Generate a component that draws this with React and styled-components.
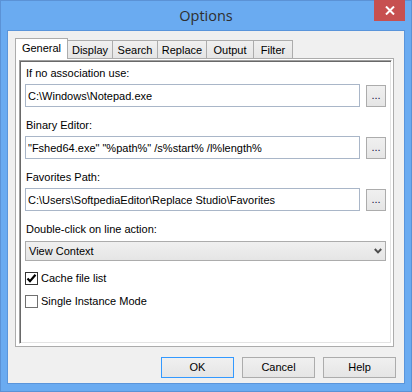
import styled, { createGlobalStyle } from "styled-components";

const GlobalStyle = createGlobalStyle`
  html, body {
    margin: 0;
    padding: 0;
    background: #6aabf1;
  }
  * {
    box-sizing: border-box;
  }
`;

const Window = styled.div`
  width: 412px;
  height: 392px;
  background-color: #6aabf1;
  border: 1px solid #5b92d6;
  display: flex;
  flex-direction: column;
  font-family: "Liberation Sans", Arial, sans-serif;
  font-size: 11px;
  color: #000;
`;

const TitleBar = styled.div`
  height: 29px;
  display: grid;
  grid-template-columns: 1fr auto 1fr;
  align-items: center;
`;

const Title = styled.div`
  grid-column: 2;
  font-family: "Open Sans", "Noto Sans", sans-serif;
  font-size: 14.5px;
  color: #2f2f2f;
  line-height: 18px;
  padding-top: 1px;
`;

const CloseButton = styled.div`
  grid-column: 3;
  justify-self: end;
  align-self: start;
  width: 31px;
  height: 21px;
  margin-top: -1px;
  margin-right: 6px;
  background-color: #c75050;
  display: flex;
  align-items: center;
  justify-content: center;
`;

const Client = styled.div`
  margin: 0 6px 7px;
  flex: 1;
  background-color: #f0f0f0;
  border: 1px solid #5a95db;
  padding: 7px 0 0 7px;
  display: flex;
  flex-direction: column;
`;

const TabStrip = styled.div`
  height: 20px;
  display: flex;
  align-items: flex-end;
`;

const Tab = styled.div`
  position: relative;
  width: ${(p) => p.$width}px;
  height: ${(p) => (p.$active ? 21 : 18)}px;
  margin-bottom: ${(p) => (p.$active ? -1 : 0)}px;
  margin-left: ${(p) => (p.$first ? 0 : -1)}px;
  z-index: ${(p) => (p.$active ? 2 : 1)};
  border: 1px solid #acacac;
  border-bottom: none;
  background: ${(p) =>
    p.$active ? "#ffffff" : "linear-gradient(#f0f0f0, #e5e5e5)"};
  text-align: center;
  line-height: 13px;
  padding-top: 3px;
  white-space: nowrap;
`;

const Panel = styled.div`
  width: 379px;
  height: 289px;
  background-color: #ffffff;
  border: 1px solid #acacac;
  padding: 1px 1px 2px 3px;
  display: flex;
`;

const Frame = styled.div`
  flex: 1;
  border-top: 1px solid #a0a0a0;
  border-left: 1px solid #a0a0a0;
  border-right: 1px solid #ffffff;
  border-bottom: 1px solid #ffffff;
  box-shadow: inset 1px 1px 0 #696969, inset -1px -1px 0 #e3e3e3;
  padding: 6px 5px 5px;
  display: flex;
  flex-direction: column;
`;

const Field = styled.div`
  display: flex;
  flex-direction: column;
  gap: ${(p) => p.$gap || 4}px;
  margin-bottom: ${(p) => (p.$last ? 0 : 12)}px;
`;

const Label = styled.div`
  line-height: 13px;
  padding-left: 1px;
`;

const Row = styled.div`
  display: flex;
  align-items: center;
  gap: 6px;
`;

const TextBox = styled.input`
  flex: 1;
  height: 23px;
  border: 1px solid #a9b6c8;
  background: #fff;
  padding: 0 2px;
  font-family: "Liberation Sans", Arial, sans-serif;
  font-size: 11px;
  color: #000;
  outline: none;
`;

const BrowseButton = styled.div`
  width: 20px;
  height: 22px;
  margin-top: 1px;
  border: 1px solid #acacac;
  background: linear-gradient(#f0f0f0, #e5e5e5);
  text-align: center;
  line-height: 18px;
  color: #101040;
`;

const ComboBox = styled.div`
  height: 20px;
  border: 1px solid #acacac;
  background: linear-gradient(#f0f0f0, #e5e5e5);
  display: flex;
  align-items: center;
  justify-content: space-between;
  padding: 0 3px;
  margin-bottom: 9px;
`;

const CheckRow = styled.div`
  height: 16px;
  display: flex;
  align-items: center;
  gap: 3px;
  margin-bottom: 7px;
`;

const CheckBox = styled.div`
  width: 13px;
  height: 13px;
  border: 1px solid ${(p) => (p.$checked ? "#333333" : "#707070")};
  background: #fff;
  display: flex;
  align-items: center;
  justify-content: center;
`;

const Footer = styled.div`
  display: flex;
  justify-content: flex-end;
  gap: 8px;
  padding-right: 8px;
  margin-top: 10px;
`;

const DialogButton = styled.div`
  width: 73px;
  height: 21px;
  border: 1px solid ${(p) => (p.$default ? "#3399ff" : "#acacac")};
  background: linear-gradient(#f0f0f0, #e5e5e5);
  text-align: center;
  line-height: 19px;
`;

const tabs = [
  { name: "General", width: 53, active: true },
  { name: "Display", width: 46 },
  { name: "Search", width: 46 },
  { name: "Replace", width: 50 },
  { name: "Output", width: 48 },
  { name: "Filter", width: 40 },
];

const paths = [
  { label: "If no association use:", value: "C:\\Windows\\Notepad.exe" },
  {
    label: "Binary Editor:",
    value: '"Fshed64.exe" "%path%" /s%start% /l%length%',
  },
  {
    label: "Favorites Path:",
    value: "C:\\Users\\SoftpediaEditor\\Replace Studio\\Favorites",
  },
];

function CloseIcon() {
  return (
    <svg width="10" height="9" viewBox="0 0 10 9">
      <path d="M1 0.5 L9 8.5 M9 0.5 L1 8.5" stroke="#fff" strokeWidth="2" />
    </svg>
  );
}

function Chevron() {
  return (
    <svg width="8" height="6" viewBox="0 0 8 6">
      <path d="M0.8 1 L4 4.4 L7.2 1" fill="none" stroke="#4d4d4d" strokeWidth="2" />
    </svg>
  );
}

function CheckMark() {
  return (
    <svg width="11" height="11" viewBox="0 0 11 11">
      <path d="M1.5 5.5 L4 8.2 L9.5 1.8" fill="none" stroke="#000" strokeWidth="2.2" />
    </svg>
  );
}

export default function App() {
  return (
    <>
      <GlobalStyle />
      <Window>
        <TitleBar>
          <Title>Options</Title>
          <CloseButton>
            <CloseIcon />
          </CloseButton>
        </TitleBar>

        <Client>
          <TabStrip>
            {tabs.map((t, i) => (
              <Tab key={t.name} $width={t.width} $active={t.active} $first={i === 0}>
                {t.name}
              </Tab>
            ))}
          </TabStrip>

          <Panel>
            <Frame>
              {paths.map((p) => (
                <Field key={p.label}>
                  <Label>{p.label}</Label>
                  <Row>
                    <TextBox readOnly value={p.value} />
                    <BrowseButton>...</BrowseButton>
                  </Row>
                </Field>
              ))}

              <Field $gap={5} $last>
                <Label>Double-click on line action:</Label>
                <ComboBox>
                  <span>View Context</span>
                  <Chevron />
                </ComboBox>
              </Field>

              <CheckRow>
                <CheckBox $checked>
                  <CheckMark />
                </CheckBox>
                <span>Cache file list</span>
              </CheckRow>
              <CheckRow>
                <CheckBox />
                <span>Single Instance Mode</span>
              </CheckRow>
            </Frame>
          </Panel>

          <Footer>
            <DialogButton $default>OK</DialogButton>
            <DialogButton>Cancel</DialogButton>
            <DialogButton>Help</DialogButton>
          </Footer>
        </Client>
      </Window>
    </>
  );
}
